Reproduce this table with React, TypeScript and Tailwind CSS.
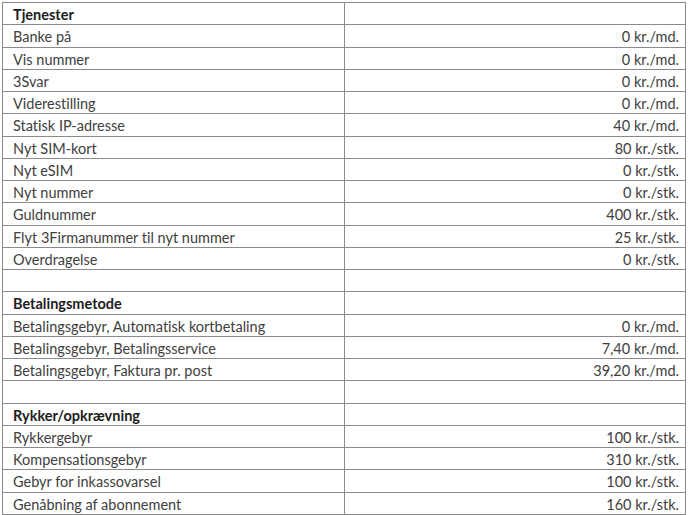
import React from "react";

type Row = { label: string; value?: string; bold?: boolean };

const rows: Row[] = [
  { label: "Tjenester", bold: true },
  { label: "Banke på", value: "0 kr./md." },
  { label: "Vis nummer", value: "0 kr./md." },
  { label: "3Svar", value: "0 kr./md." },
  { label: "Viderestilling", value: "0 kr./md." },
  { label: "Statisk IP-adresse", value: "40 kr./md." },
  { label: "Nyt SIM-kort", value: "80 kr./stk." },
  { label: "Nyt eSIM", value: "0 kr./stk." },
  { label: "Nyt nummer", value: "0 kr./stk." },
  { label: "Guldnummer", value: "400 kr./stk." },
  { label: "Flyt 3Firmanummer til nyt nummer", value: "25 kr./stk." },
  { label: "Overdragelse", value: "0 kr./stk." },
  { label: "" },
  { label: "Betalingsmetode", bold: true },
  { label: "Betalingsgebyr, Automatisk kortbetaling", value: "0 kr./md." },
  { label: "Betalingsgebyr, Betalingsservice", value: "7,40 kr./md." },
  { label: "Betalingsgebyr, Faktura pr. post", value: "39,20 kr./md." },
  { label: "" },
  { label: "Rykker/opkrævning", bold: true },
  { label: "Rykkergebyr", value: "100 kr./stk." },
  { label: "Kompensationsgebyr", value: "310 kr./stk." },
  { label: "Gebyr for inkassovarsel", value: "100 kr./stk." },
  { label: "Genåbning af abonnement", value: "160 kr./stk." },
];

export default function App() {
  return (
    <div
      className="w-[688px] h-[515px] overflow-hidden bg-white pl-[2px] pt-[2px] [font-variant-ligatures:none]"
      style={{ fontFamily: "Lato, 'Open Sans', sans-serif" }}
    >
      <table className="w-[684px] border-collapse table-fixed text-[14.5px] text-[#404040]">
        <colgroup>
          <col className="w-[342px]" />
          <col />
        </colgroup>
        <tbody>
          {rows.map((r, i) => (
            <tr key={i} className="h-[22.26px]">
              <td
                className={`border border-[#8a8a8a] pl-[10px] pr-1 pt-[3px] pb-0 align-top leading-[17px] whitespace-nowrap ${
                  r.bold ? "font-bold text-[#202020]" : ""
                }`}
              >
                {r.label}
              </td>
              <td className="border border-[#8a8a8a] pr-[6px] pt-[3px] pb-0 align-top text-right leading-[17px] whitespace-nowrap">
                {r.value ?? ""}
              </td>
            </tr>
          ))}
        </tbody>
      </table>
    </div>
  );
}
